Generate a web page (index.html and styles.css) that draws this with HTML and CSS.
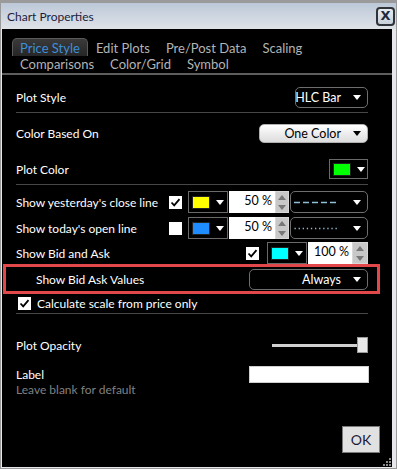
FILE: index.html
```html
<!DOCTYPE html>
<html lang="en">
<head>
    <meta charset="UTF-8">
    <title>Chart Properties</title>
    <link rel="stylesheet" href="styles.css">
</head>
<body>
    <div class="window">
        <div class="titlebar">
            <span class="title">Chart Properties</span>
            <button class="close">X</button>
        </div>
        <div class="content">
            <div class="tabs">
                <div class="tab-row">
                    <span class="tab active">Price Style</span>
                    <span class="tab">Edit Plots</span>
                    <span class="tab">Pre/Post Data</span>
                    <span class="tab">Scaling</span>
                </div>
                <div class="tab-row">
                    <span class="tab">Comparisons</span>
                    <span class="tab">Color/Grid</span>
                    <span class="tab">Symbol</span>
                </div>
            </div>

            <div class="form">
                <div class="row r-style">
                    <span>Plot Style</span>
                    <div class="dropdown dark w-hlc">HLC Bar<i class="caret"></i></div>
                </div>
                <div class="sep s1"></div>

                <div class="row r-based">
                    <span>Color Based On</span>
                    <div class="dropdown light w-one">One Color<i class="caret"></i></div>
                </div>

                <div class="row r-color">
                    <span>Plot Color</span>
                    <div class="colorbox"><span class="swatch green"></span><i class="caret"></i></div>
                </div>
                <div class="sep s2"></div>

                <div class="row r-line r-close">
                    <span>Show yesterday's close line</span>
                    <div class="controls">
                        <span class="check on">
                            <svg width="13" height="13" viewBox="0 0 13 13"><path d="M2.5 6.5 L5.2 9.3 L10.5 3.2" fill="none" stroke="#000" stroke-width="1.8"/></svg>
                        </span>
                        <div class="colorbox"><span class="swatch yellow"></span><i class="caret"></i></div>
                        <div class="spinner">
                            <span class="spin-value">50 %</span>
                            <span class="spin-btns"><i class="up"></i><i class="down"></i></span>
                        </div>
                        <div class="dropdown dark w-line">
                            <svg width="44" height="3" viewBox="0 0 44 3"><line x1="0" y1="1.5" x2="44" y2="1.5" stroke="#8fbfd6" stroke-width="1.3" stroke-dasharray="6 3"/></svg>
                            <i class="caret"></i>
                        </div>
                    </div>
                </div>

                <div class="row r-line r-open">
                    <span>Show today's open line</span>
                    <div class="controls">
                        <span class="check"></span>
                        <div class="colorbox"><span class="swatch blue"></span><i class="caret"></i></div>
                        <div class="spinner">
                            <span class="spin-value">50 %</span>
                            <span class="spin-btns"><i class="up"></i><i class="down"></i></span>
                        </div>
                        <div class="dropdown dark w-line">
                            <svg width="44" height="3" viewBox="0 0 44 3"><line x1="0.5" y1="1.5" x2="44" y2="1.5" stroke="#8fbfd6" stroke-width="1.3" stroke-dasharray="1.3 2.8"/></svg>
                            <i class="caret"></i>
                        </div>
                    </div>
                </div>

                <div class="row r-line r-bid">
                    <span>Show Bid and Ask</span>
                    <div class="controls bid">
                        <span class="check on">
                            <svg width="13" height="13" viewBox="0 0 13 13"><path d="M2.5 6.5 L5.2 9.3 L10.5 3.2" fill="none" stroke="#000" stroke-width="1.8"/></svg>
                        </span>
                        <div class="colorbox"><span class="swatch cyan"></span><i class="caret"></i></div>
                        <div class="spinner wide">
                            <span class="spin-value">100 %</span>
                            <span class="spin-btns"><i class="up"></i><i class="down"></i></span>
                        </div>
                    </div>
                </div>

                <div class="row highlight">
                    <span>Show Bid Ask Values</span>
                    <div class="dropdown dark w-always">Always<i class="caret"></i></div>
                </div>

                <div class="calc">
                    <span class="check on">
                        <svg width="13" height="13" viewBox="0 0 13 13"><path d="M2.5 6.5 L5.2 9.3 L10.5 3.2" fill="none" stroke="#000" stroke-width="1.8"/></svg>
                    </span>
                    <span>Calculate scale from price only</span>
                </div>
                <div class="sep s3"></div>

                <div class="row r-opacity">
                    <span>Plot Opacity</span>
                    <div class="slider"><span class="track"></span><span class="thumb"></span></div>
                </div>

                <div class="row r-label">
                    <div class="label-text">
                        <div class="label-main">Label</div>
                        <div class="hint">Leave blank for default</div>
                    </div>
                    <input class="text-input" type="text">
                </div>

                <div class="actions">
                    <button class="ok">OK</button>
                </div>
            </div>

            <svg class="grip" width="10" height="10" viewBox="0 0 10 10">
                <rect x="7" y="1" width="2" height="2" fill="#8a8a8a"/>
                <rect x="4" y="4" width="2" height="2" fill="#8a8a8a"/>
                <rect x="7" y="4" width="2" height="2" fill="#8a8a8a"/>
                <rect x="1" y="7" width="2" height="2" fill="#8a8a8a"/>
                <rect x="4" y="7" width="2" height="2" fill="#8a8a8a"/>
                <rect x="7" y="7" width="2" height="2" fill="#8a8a8a"/>
            </svg>
        </div>
    </div>
</body>
</html>
```

FILE: styles.css
```css
* {
    box-sizing: border-box;
}
body {
    margin: 0;
    font-family: Lato, "Open Sans", sans-serif;
    font-size: 12px;
    background-color: #a0a0a0;
}
.window {
    width: 397px;
    height: 469px;
    display: flex;
    flex-direction: column;
    border-top: 3px solid #9a9a9a;
    border-left: 1px solid #9a9a9a;
    border-right: 1px solid #9a9a9a;
    border-bottom: 1px solid #9a9a9a;
    background-color: #e6e8eb;
}
.titlebar {
    height: 26px;
    display: flex;
    align-items: center;
    padding-left: 6px;
    padding-right: 1px;
    background: linear-gradient(to bottom, #bcc8d8, #dfe3e8);
}
.title {
    color: #1c1c3c;
    font-size: 12px;
}
.close {
    margin-left: auto;
    width: 19px;
    height: 19px;
    padding: 0;
    border: 2px solid #30343a;
    border-radius: 4px;
    background: linear-gradient(to bottom, #e8ecf0, #c8d0da);
    color: #1e2838;
    font-family: "DejaVu Sans", sans-serif;
    font-weight: bold;
    font-size: 13px;
    line-height: 14px;
}
.content {
    flex: 1;
    position: relative;
    margin: 0 4px 1px 1px;
    background-color: #000;
    color: #fff;
    display: flex;
    flex-direction: column;
}

/* tabs */
.tabs {
    padding: 9px 0 1px 10px;
    border-bottom: 2px solid #5e5e5e;
}
.tab-row {
    display: flex;
    height: 16px;
}
.tab-row:first-child {
    height: 18px;
}
.tab {
    padding: 3px 8px 0;
    line-height: 15px;
    font-size: 13px;
    color: #b4b4b4;
    white-space: nowrap;
}
.tab-row + .tab-row .tab {
    padding-top: 1px;
}
.tab.active {
    height: 18px;
    color: #3d8fd8;
    background: linear-gradient(to bottom, #3a3a3a, #262626);
    border: 1px solid #5a5a5a;
    border-bottom: none;
    border-radius: 5px 5px 0 0;
    padding: 2px 7px 0;
}

/* form rows */
.form {
    display: flex;
    flex-direction: column;
    padding: 0 24px 0 14px;
}
.row {
    display: flex;
    align-items: center;
    justify-content: space-between;
    white-space: nowrap;
}
.sep {
    height: 1px;
    background-color: #474747;
}
.r-style { margin-top: 12px; height: 21px; }
.s1 { margin-top: 4px; }
.r-based { margin-top: 11px; height: 19px; }
.r-color { margin-top: 16px; height: 20px; }
.s2 { margin-top: 5px; }
.r-close { margin-top: 6px; height: 22px; }
.r-open { margin-top: 4px; height: 22px; }
.r-bid { margin-top: 3px; height: 22px; }
.s3 { margin-top: 3px; }
.r-opacity { margin-top: 23px; height: 16px; }
.r-label { margin-top: 13px; align-items: flex-start; }

.controls {
    display: flex;
    align-items: center;
    gap: 1px;
}
.controls .check {
    margin-right: 5px;
}
.controls.bid .check {
    margin-right: 7px;
}

/* dropdowns */
.dropdown {
    display: flex;
    align-items: center;
    justify-content: flex-end;
    border-radius: 5px;
    padding-right: 6px;
    font-size: 12.5px;
}
.dropdown.dark {
    background-color: #000;
    border: 1px solid #6e6e6e;
    color: #fff;
}
.dropdown.light {
    background: linear-gradient(to bottom, #ffffff, #dcdcdc);
    border: 1px solid #b0b0b0;
    color: #000;
}
.caret {
    display: inline-block;
    margin-left: 12px;
    border-left: 4px solid transparent;
    border-right: 4px solid transparent;
    border-top: 5px solid #fff;
}
.dropdown.light .caret {
    border-top-color: #000;
}
.w-hlc { width: 73px; height: 21px; }
.w-one { width: 109px; height: 19px; }
.w-line { width: 78px; height: 22px; }
.w-line svg { margin-right: 3px; }
.w-always { width: 119px; height: 21px; }

/* color picker */
.colorbox {
    width: 40px;
    height: 22px;
    display: flex;
    align-items: center;
    padding-left: 3px;
    border: 1px solid #6a6a6a;
    background-color: #000;
}
.r-color .colorbox {
    width: 39px;
    height: 20px;
}
.colorbox .caret {
    margin-left: 6px;
}
.swatch {
    width: 18px;
    height: 13px;
    border: 1px solid #222;
}
.green { background-color: #00ff00; }
.yellow { background-color: #ffff00; }
.blue { background-color: #1e8cff; }
.cyan { background-color: #00ffff; }

/* checkbox */
.check {
    width: 13px;
    height: 13px;
    background-color: #fff;
    display: flex;
}

/* spinner */
.spinner {
    display: flex;
    width: 60px;
    height: 22px;
}
.spin-value {
    flex: 1;
    background-color: #fff;
    color: #000;
    text-align: right;
    padding-right: 3px;
    line-height: 20px;
    font-size: 12.5px;
}
.spin-btns {
    width: 14px;
    display: flex;
    flex-direction: column;
    background-color: #c8c8c8;
    border: 1px solid #d8d8d8;
}
.spinner.wide .spin-btns {
    width: 16px;
}
.spin-btns i {
    flex: 1;
    display: flex;
    align-items: center;
    justify-content: center;
}
.spin-btns .up::before {
    content: "";
    border-left: 4px solid transparent;
    border-right: 4px solid transparent;
    border-bottom: 5px solid #777;
}
.spin-btns .down::before {
    content: "";
    border-left: 4px solid transparent;
    border-right: 4px solid transparent;
    border-top: 5px solid #777;
}

/* highlighted row */
.highlight {
    height: 30px;
    margin: 0 -12px 0 -13px;
    border: 3px solid #e2474a;
    padding: 0 9px 0 30px;
}

.calc {
    margin-top: 3px;
    margin-left: 2px;
    height: 13px;
    display: flex;
    align-items: center;
    gap: 6px;
}

/* slider */
.slider {
    width: 96px;
    height: 16px;
    display: flex;
    align-items: center;
}
.track {
    width: 88px;
    height: 3px;
    background-color: #d0d0d0;
}
.thumb {
    width: 11px;
    height: 16px;
    margin-left: -3px;
    background-color: #e8e8e8;
    border: 1px solid #9a9a9a;
}

/* label */
.label-main {
    line-height: 17px;
}
.hint {
    line-height: 14px;
    color: #808080;
    font-size: 12px;
}
.text-input {
    width: 120px;
    height: 17px;
    margin-right: -1px;
    border: 1px solid #cfcfcf;
    background-color: #fff;
}

.actions {
    margin-top: 29px;
    display: flex;
    justify-content: flex-end;
    margin-right: -12px;
}
.ok {
    width: 38px;
    height: 27px;
    background-color: #e1e1e1;
    border: 1px solid #7a7a7a;
    color: #1a1a3a;
    font-family: Lato, sans-serif;
    font-size: 14px;
    padding: 0;
}
.grip {
    position: absolute;
    right: 0;
    bottom: 0;
}
```
